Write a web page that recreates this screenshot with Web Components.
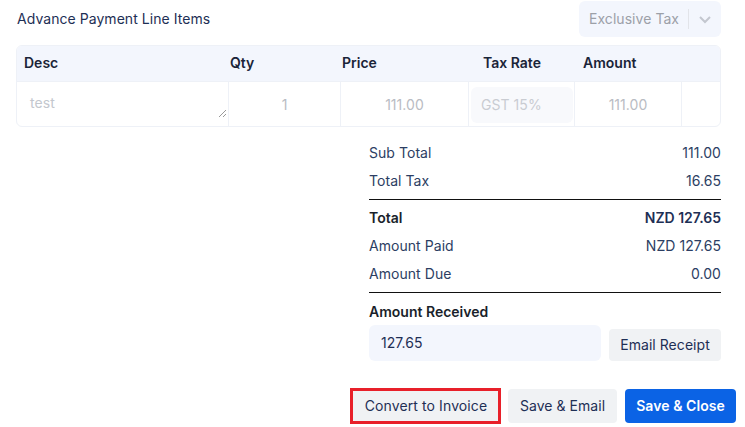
<!DOCTYPE html>
<html><head><meta charset="utf-8"><style>
html,body{margin:0;padding:0;background:#fff;overflow:hidden}
body{font:14px/20px Inter,"Liberation Sans",sans-serif;color:#1e2f55;letter-spacing:.05px}
</style></head><body>
<template id="t-select"><style>
:host{display:flex;align-items:center;width:142px;height:36px;box-sizing:border-box;background:#f3f6fd;border-radius:6px;color:#9ca0a8;padding-left:10px}
.l{flex:1}.d{width:1px;height:20px;background:#e2e4e9}.c{width:32px;display:flex;justify-content:center}
</style><span class="l"><slot></slot></span><span class="d"></span><span class="c"><svg width="14" height="14" viewBox="0 0 14 14" fill="none" stroke="#c3c7cf" stroke-width="2"><path d="M2 5l5 5 5-5"/></svg></span></template>

<template id="t-table"><style>
:host{display:block;border:1px solid #eef1f7;border-radius:6px;overflow:hidden;height:82px;box-sizing:border-box}
.g{display:grid;grid-template-columns:212px 112px 128px 106px 107px 38px;}
.h{background:#f3f6fd;height:36px;border-bottom:1px solid #eef1f7;box-sizing:border-box;font-weight:600;color:#1a2438;align-items:center;letter-spacing:0}
.h span{padding-left:7px;padding-bottom:1px}.h span+span{padding-left:1px}
.h span:nth-child(3){padding-left:1px}.h span:nth-child(4){padding-left:14px}.h span:nth-child(5){padding-left:8px}
.r{height:44px;color:#b9bcc3}
.r>div{border-right:1px solid #eef1f7;display:flex;align-items:center;justify-content:center;box-sizing:border-box;padding-top:2px}
.r>div:last-child{border:0}
.r .desc{position:relative;justify-content:flex-start;align-items:flex-start;padding:11px 0 0 13px;color:#c3c7ce}
.r .desc svg{position:absolute;right:1px;bottom:8px}
.r .tax{justify-content:flex-start;padding:2px 1px 0 2px}
.tax i{font-style:normal;display:flex;align-items:center;height:36px;flex:1;background:#f8f9fc;border-radius:6px;padding-left:10px;color:#c9ccd2}
</style>
<div class="g h"><span>Desc</span><span>Qty</span><span>Price</span><span>Tax Rate</span><span>Amount</span><span></span></div>
<div class="g r"><div class="desc">test<svg width="9" height="9" viewBox="0 0 9 9" stroke="#999" stroke-width="1" fill="none"><path d="M1 8l7-7M5 8l3-3"/></svg></div><div>1</div><div>111.00</div><div class="tax"><i>GST 15%</i></div><div>111.00</div><div></div></div>
</template>

<template id="t-row"><style>
:host{display:flex;justify-content:space-between;align-items:center;height:28px;color:#2c3e63}
:host([strong]){font-weight:600;letter-spacing:0}
:host([strong]) .a{color:#1a1f2b}
:host([strong]) .b{color:#1e2f55}
</style><span class="a"><slot name="a"></slot></span><span class="b"><slot name="b"></slot></span></template>

<template id="t-btn"><style>
:host{display:inline-flex;align-items:center;justify-content:center;box-sizing:border-box;height:32px;background:#f0f2f4;border-radius:4px;color:#1e2f55;white-space:nowrap;position:relative}
:host([primary]){background:#0b63e5;color:#fff;font-weight:600}
:host([marked]){letter-spacing:.1px;padding-left:1px}
:host([marked])::after{content:"";position:absolute;inset:-1px -3px;border:3px solid #e8202a}
</style><slot></slot></template>

<template id="t-input"><style>
:host{display:flex;align-items:center;box-sizing:border-box;height:36px;background:#f3f6fd;border-radius:6px;padding:0 12px;color:#1e2f55}
</style><slot></slot></template>

<template id="t-page"><style>
:host{display:flex;flex-direction:column;width:745px;height:427px;box-sizing:border-box;padding:1px 9px 0 16px}
.top{display:flex;justify-content:space-between;align-items:center;height:36px;margin-right:15px;color:#1e2f55}
.top .t{padding-left:1px}
.table{margin:8px 15px 0 0}
.sum{align-self:flex-end;width:352px;margin:12px 15px 0 0}
hr{border:0;border-top:1px solid #111;margin:4px 0 4px;height:0}
.hr2{margin:4px 0 9px}
.lab{font-weight:600;color:#1a1f2b;height:20px;letter-spacing:0}
.recv{display:flex;gap:8px;align-items:flex-end;margin-top:3px}
.acts{display:flex;justify-content:flex-end;margin-top:28px}
</style>
<div class="top"><span class="t"><slot name="title"></slot></span><slot name="select"></slot></div>
<div class="table"><slot name="table"></slot></div>
<div class="sum"><slot name="s1"></slot><hr><slot name="s2"></slot><hr class="hr2"><div class="lab"><slot name="lab"></slot></div><div class="recv"><slot name="recv"></slot></div></div>
<div class="acts"><slot name="acts"></slot></div>
</template>

<c-page>
<span slot="title">Advance Payment Line Items</span>
<c-select slot="select">Exclusive Tax</c-select>
<c-table slot="table"></c-table>
<div slot="s1"><c-row><span slot="a">Sub Total</span><span slot="b">111.00</span></c-row><c-row><span slot="a">Total Tax</span><span slot="b">16.65</span></c-row></div>
<div slot="s2"><c-row strong><span slot="a">Total</span><span slot="b">NZD 127.65</span></c-row><c-row><span slot="a">Amount Paid</span><span slot="b">NZD 127.65</span></c-row><c-row><span slot="a">Amount Due</span><span slot="b">0.00</span></c-row></div>
<span slot="lab">Amount Received</span>
<c-input slot="recv" style="width:232px">127.65</c-input>
<c-btn slot="recv" style="width:112px">Email Receipt</c-btn>
<div slot="acts" style="display:flex"><c-btn marked style="width:145px;height:34px;margin-right:10px">Convert to Invoice</c-btn><c-btn style="width:109px;height:34px;margin-right:8px">Save &amp; Email</c-btn><c-btn primary style="width:111px;height:34px">Save &amp; Close</c-btn></div>
</c-page>
<script>
for(const [tag,id] of [['c-select','t-select'],['c-table','t-table'],['c-row','t-row'],['c-btn','t-btn'],['c-input','t-input'],['c-page','t-page']]){
customElements.define(tag,class extends HTMLElement{constructor(){super();this.attachShadow({mode:'open'}).appendChild(document.getElementById(id).content.cloneNode(true));}});
}
</script>
</body></html>
